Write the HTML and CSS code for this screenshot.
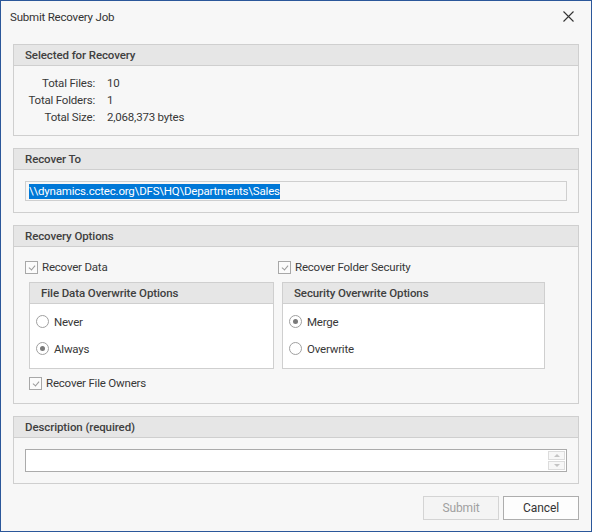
FILE: index.html
```html
<!DOCTYPE html>
<html lang="en">
<head>
    <meta charset="UTF-8">
    <meta name="viewport" content="width=device-width, initial-scale=1.0">
    <title>Submit Recovery Job</title>
    <link rel="stylesheet" href="styles.css">
</head>
<body>
    <div class="dialog">
        <div class="titlebar">
            <span class="title">Submit Recovery Job</span>
            <svg class="close" width="11" height="11" viewBox="0 0 11 11">
                <path d="M0.5 0.5 L10.5 10.5 M10.5 0.5 L0.5 10.5" stroke="#333" stroke-width="1.1" fill="none"/>
            </svg>
        </div>

        <section class="group">
            <div class="group-header">Selected for Recovery</div>
            <div class="group-body summary">
                <span class="label">Total Files:</span><span class="value">10</span>
                <span class="label">Total Folders:</span><span class="value">1</span>
                <span class="label">Total Size:</span><span class="value">2,068,373 bytes</span>
            </div>
        </section>

        <section class="group">
            <div class="group-header">Recover To</div>
            <div class="group-body padded">
                <div class="path-field"><span class="selected">\\dynamics.cctec.org\DFS\HQ\Departments\Sales</span></div>
            </div>
        </section>

        <section class="group">
            <div class="group-header">Recovery Options</div>
            <div class="group-body options">
                <div class="option-col">
                    <label class="check"><span class="box checked"></span>Recover Data</label>
                    <div class="subgroup">
                        <div class="subgroup-header">File Data Overwrite Options</div>
                        <div class="subgroup-body">
                            <label class="radio"><span class="dot"></span>Never</label>
                            <label class="radio"><span class="dot on"></span>Always</label>
                        </div>
                    </div>
                    <label class="check indent"><span class="box checked"></span>Recover File Owners</label>
                </div>
                <div class="option-col">
                    <label class="check"><span class="box checked"></span>Recover Folder Security</label>
                    <div class="subgroup">
                        <div class="subgroup-header">Security Overwrite Options</div>
                        <div class="subgroup-body">
                            <label class="radio"><span class="dot on"></span>Merge</label>
                            <label class="radio"><span class="dot"></span>Overwrite</label>
                        </div>
                    </div>
                </div>
            </div>
        </section>

        <section class="group">
            <div class="group-header">Description (required)</div>
            <div class="group-body padded">
                <div class="desc-field">
                    <div class="spinner">
                        <span class="spin up"></span>
                        <span class="spin down"></span>
                    </div>
                </div>
            </div>
        </section>

        <div class="actions">
            <button class="btn" disabled>Submit</button>
            <button class="btn">Cancel</button>
        </div>
    </div>
</body>
</html>
```

FILE: styles.css
```css
* {
    box-sizing: border-box;
}
body {
    margin: 0;
    font-family: Roboto, "Noto Sans", sans-serif;
    font-size: 11.5px;
    letter-spacing: -0.2px;
    color: #383838;
}
.dialog {
    width: 592px;
    height: 532px;
    background: #f7f7f7;
    border: 1px solid #2b579a;
    padding: 0 12px;
}
.titlebar {
    height: 31px;
    margin: 0 -12px 12px;
    padding: 0 17px 0 9px;
    display: flex;
    align-items: center;
    justify-content: space-between;
}
.title {
    color: #333;
}
.group {
    border: 1px solid #cfcfcf;
    margin-bottom: 12px;
}
.group-header {
    height: 21px;
    line-height: 20px;
    padding-left: 11px;
    background: #e6e6e6;
    border-bottom: 1px solid #cfcfcf;
    font-weight: 500;
    font-size: 11.5px;
    letter-spacing: -0.1px;
    color: #404040;
}
.summary {
    display: grid;
    grid-template-columns: 70px 1fr;
    align-content: start;
    column-gap: 12px;
    padding: 9px 11px 0;
    height: 69px;
    line-height: 17px;
}
.summary .label {
    text-align: right;
}
.padded {
    padding: 11px;
}
.path-field {
    height: 20px;
    border: 1px solid #cfcfcf;
    padding: 1px 3px;
    line-height: 16px;
    white-space: nowrap;
}
.selected {
    background: #0078d7;
    color: #fff;
    display: inline-block;
    line-height: 15px;
}
.options {
    display: grid;
    grid-template-columns: 249px 267px;
    column-gap: 4px;
    padding: 12px 11px 12px;
}
.check {
    display: flex;
    align-items: center;
    height: 16px;
    gap: 4px;
}
.check.indent {
    margin: 6px 0 0 4px;
}
.box {
    width: 13px;
    height: 13px;
    border: 1px solid #a8a8a8;
    background: #fbfbfb;
    position: relative;
}
.box.checked::after {
    content: "";
    position: absolute;
    left: 4px;
    top: 2px;
    width: 3px;
    height: 5px;
    border-right: 1px solid #9a9a9a;
    border-bottom: 1px solid #9a9a9a;
    transform: rotate(40deg);
}
.subgroup {
    margin: 7px 0 0 4px;
    border: 1px solid #cfcfcf;
}
.subgroup-header {
    height: 21px;
    line-height: 20px;
    padding-left: 11px;
    background: #e6e6e6;
    border-bottom: 1px solid #cfcfcf;
    font-weight: 500;
    font-size: 11.5px;
    letter-spacing: -0.1px;
    color: #404040;
}
.subgroup-body {
    background: #fff;
    height: 64px;
    padding: 4px 6px 0;
}
.radio {
    display: flex;
    align-items: center;
    gap: 5px;
    height: 27px;
}
.dot {
    width: 13px;
    height: 13px;
    border: 1px solid #a0a0a0;
    border-radius: 50%;
    background: #fff;
    display: flex;
    align-items: center;
    justify-content: center;
}
.dot.on::after {
    content: "";
    width: 5px;
    height: 5px;
    border-radius: 50%;
    background: #7a7a7a;
}
.desc-field {
    height: 23px;
    border: 1px solid #ababab;
    background: #fff;
    display: flex;
    justify-content: flex-end;
    padding: 1px 1px 0 0;
}
.spinner {
    width: 17px;
    display: flex;
    flex-direction: column;
    gap: 1px;
}
.spin {
    height: 9px;
    border: 1px solid #dcdcdc;
    background: #f7f7f7;
    display: flex;
    align-items: center;
    justify-content: center;
}
.spin::after {
    content: "";
    border-left: 3px solid transparent;
    border-right: 3px solid transparent;
}
.spin.up::after {
    border-bottom: 3px solid #c4c4c4;
}
.spin.down::after {
    border-top: 3px solid #c4c4c4;
}
.actions {
    display: flex;
    justify-content: flex-end;
    gap: 4px;
}
.btn {
    width: 76px;
    height: 24px;
    font-family: inherit;
    font-size: 12px;
    letter-spacing: -0.1px;
    color: #333;
    background: #fdfdfd;
    border: 1px solid #adadad;
    padding: 0;
}
.btn:disabled {
    color: #a0a0a0;
    background: #f4f4f4;
    border-color: #d4d4d4;
}
```
